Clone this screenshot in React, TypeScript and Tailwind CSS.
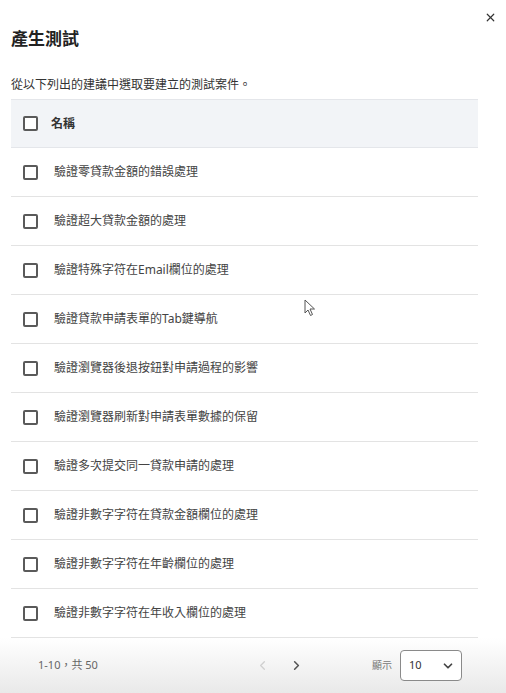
import { X, ChevronLeft, ChevronRight, ChevronDown } from "lucide-react";

const ROWS: string[] = [
  "驗證零貸款金額的錯誤處理",
  "驗證超大貸款金額的處理",
  "驗證特殊字符在Email欄位的處理",
  "驗證貸款申請表單的Tab鍵導航",
  "驗證瀏覽器後退按鈕對申請過程的影響",
  "驗證瀏覽器刷新對申請表單數據的保留",
  "驗證多次提交同一貸款申請的處理",
  "驗證非數字字符在貸款金額欄位的處理",
  "驗證非數字字符在年齡欄位的處理",
  "驗證非數字字符在年收入欄位的處理",
];

function Box() {
  return <span className="block w-[15px] h-[15px] shrink-0 rounded-[2px] border-2 border-[#5a5a5a] bg-white" />;
}

export default function App() {
  return (
    <div
      className="relative w-[506px] h-[693px] bg-white overflow-hidden flex flex-col"
      style={{ fontFamily: '"Noto Sans", "Noto Sans CJK TC", sans-serif' }}
    >
      <button className="absolute top-[11px] right-[9px] text-[#333]">
        <X size={13} strokeWidth={2.2} />
      </button>

      <div className="pl-[11px] pr-[28px]">
        <h1 className="mt-[27px] text-[17px] leading-[24px] font-bold text-[#222]">產生測試</h1>
        <p className="mt-[26px] text-[12px] leading-[16px] text-[#333]">從以下列出的建議中選取要建立的測試案件。</p>

        <div className="mt-[6px]">
          <div className="h-[49px] flex items-center gap-[13px] pl-[12px] bg-[#f2f4f7] border-y border-[#e4e6ea]">
            <Box />
            <span className="text-[12px] font-bold text-[#333]">名稱</span>
          </div>
          {ROWS.map((row) => (
            <div key={row} className="h-[49px] flex items-center gap-[16px] pl-[12px] border-b border-[#e3e3e3]">
              <Box />
              <span className="text-[12px] text-[#444]">{row}</span>
            </div>
          ))}
        </div>
      </div>

      <div className="flex-1 flex items-center bg-gradient-to-b from-white to-[#e9e9e9] text-[11px] text-[#666]">
        <span className="ml-[38px] w-[210px]">1-10，共 50</span>
        <ChevronLeft size={15} strokeWidth={2} className="ml-[7px] text-[#d0d0d0]" />
        <ChevronRight size={15} strokeWidth={2.5} className="ml-[19px] text-[#555]" />
        <span className="ml-[68px] text-[10px] text-[#777]">顯示</span>
        <div className="ml-[8px] w-[62px] h-[31px] flex items-center justify-between pl-[8px] pr-[6px] border border-[#8a8a8a] rounded-[4px] bg-white text-[#333]">
          <span>10</span>
          <ChevronDown size={14} strokeWidth={3} className="text-[#444]" />
        </div>
      </div>

      <svg className="absolute left-[304px] top-[299px]" width="12" height="18" viewBox="0 0 12 18">
        <path d="M1 1 L1 14 L4 11 L6.5 16.5 L8.5 15.5 L6 10 L10.5 10 Z" fill="#fff" stroke="#555" strokeWidth="1" strokeLinejoin="round" />
      </svg>
    </div>
  );
}
